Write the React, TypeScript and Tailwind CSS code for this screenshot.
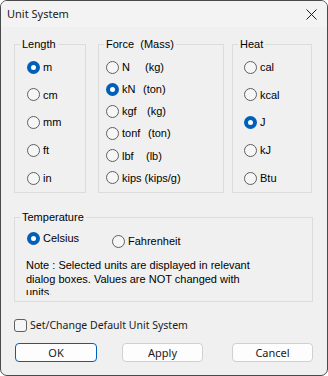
import React from 'react';

const LENGTH = [
  { label: 'm', on: true },
  { label: 'cm', on: false },
  { label: 'mm', on: false },
  { label: 'ft', on: false },
  { label: 'in', on: false },
];

// first part gets a fixed width so the mass column lands where the dialog puts it
const FORCE = [
  { a: 'N', b: '(kg)', w: 'w-[23px]', on: false },
  { a: 'kN', b: '(ton)', w: 'w-[21px]', on: true },
  { a: 'kgf', b: '(kg)', w: 'w-[25px]', on: false },
  { a: 'tonf', b: '(ton)', w: 'w-[26px]', on: false },
  { a: 'lbf', b: '(lb)', w: 'w-[24px]', on: false },
  { a: 'kips', b: '(kips/g)', w: 'mr-[3px]', on: false },
];

const HEAT = [
  { label: 'cal', on: false },
  { label: 'kcal', on: false },
  { label: 'J', on: true },
  { label: 'kJ', on: false },
  { label: 'Btu', on: false },
];

function Radio({ on }: { on: boolean }) {
  if (on) {
    return (
      <span className="w-[13px] h-[13px] rounded-full bg-[#005fb8] flex items-center justify-center shrink-0">
        <span className="w-[5px] h-[5px] rounded-full bg-white" />
      </span>
    );
  }
  return <span className="w-[13px] h-[13px] rounded-full border border-[#5f5f5f] bg-[#f6f6f6] shrink-0" />;
}

function Legend({ children }: { children: React.ReactNode }) {
  return (
    <legend className="ml-[5px] px-[2px] leading-4 text-[11px] text-black">{children}</legend>
  );
}

export default function App() {
  return (
    <div className="w-[328px] h-[376px] bg-[#f0f0f0] border border-[#4a4a4a] rounded-[7px] overflow-hidden flex flex-col font-['Liberation_Sans',Arial,sans-serif] text-black text-[11px]">
      {/* Title bar */}
      <div className="h-[26px] bg-[#f3f3f3] flex items-center justify-between pl-[6px] pr-[10px] shrink-0">
        <span className="text-[11px] font-['Noto_Sans',sans-serif] text-[#1a1a1a]">Unit System</span>
        <svg width="11" height="11" viewBox="0 0 11 11">
          <path d="M0.5 0.5 L10.5 10.5 M10.5 0.5 L0.5 10.5" stroke="#1c1c1c" strokeWidth="1" fill="none" />
        </svg>
      </div>

      <div className="px-[13px] flex flex-col">
        {/* Unit groups */}
        <div className="flex mt-[9px]">
          <fieldset className="w-[72px] border border-[#dcdcdc]">
            <Legend>Length</Legend>
            <div className="pl-[12px] pt-[8px] pb-[7px]">
              <div className="h-[125px] flex flex-col justify-between">
                {LENGTH.map((r) => (
                  <div key={r.label} className="h-[14px] flex items-center gap-[3px]">
                    <Radio on={r.on} />
                    <span>{r.label}</span>
                  </div>
                ))}
              </div>
            </div>
          </fieldset>

          <fieldset className="w-[126px] ml-[12px] border border-[#dcdcdc]">
            <Legend>Force&nbsp;&nbsp;(Mass)</Legend>
            <div className="pl-[7px] pt-[8px] pb-[7px]">
              <div className="h-[125px] flex flex-col justify-between">
                {FORCE.map((r) => (
                  <div key={r.a} className="h-[14px] flex items-center gap-[3px]">
                    <Radio on={r.on} />
                    <span className="whitespace-nowrap">
                      <span className={`inline-block ${r.w}`}>{r.a}</span>
                      {r.b}
                    </span>
                  </div>
                ))}
              </div>
            </div>
          </fieldset>

          <fieldset className="w-[80px] ml-[8px] border border-[#dcdcdc]">
            <Legend>Heat</Legend>
            <div className="pl-[11px] pt-[8px] pb-[7px]">
              <div className="h-[125px] flex flex-col justify-between">
                {HEAT.map((r) => (
                  <div key={r.label} className="h-[14px] flex items-center gap-[3px]">
                    <Radio on={r.on} />
                    <span>{r.label}</span>
                  </div>
                ))}
              </div>
            </div>
          </fieldset>
        </div>

        {/* Temperature */}
        <fieldset className="w-[299px] mt-[16px] border border-[#dcdcdc]">
          <Legend>Temperature</Legend>
          <div className="pt-[6px] pb-[6px]">
            <div className="flex items-start pl-[12px]">
              <div className="w-[85px] h-[14px] flex items-center gap-[3px]">
                <Radio on={true} />
                <span>Celsius</span>
              </div>
              <div className="mt-[3px] h-[14px] flex items-center gap-[3px]">
                <Radio on={false} />
                <span>Fahrenheit</span>
              </div>
            </div>
            <p className="ml-[11px] mt-[11px] w-[232px] h-[36px] overflow-hidden leading-[13.5px]">
              Note : Selected units are displayed in relevant dialog boxes. Values are NOT changed with units.
            </p>
          </div>
        </fieldset>

        {/* Default checkbox */}
        <label className="mt-[17px] flex items-center gap-[3px] h-[13px]">
          <span className="w-[13px] h-[13px] rounded-[3px] border border-[#5f5f5f] bg-[#f6f6f6] shrink-0" />
          <span className="text-[10.5px] font-['Noto_Sans',sans-serif] text-[#1a1a1a]">Set/Change Default Unit System</span>
        </label>

        {/* Buttons */}
        <div className="mt-[11px] flex items-center">
          <button className="ml-[1px] w-[82px] h-[19px] rounded-[4px] border border-[#005fb8] bg-[#fdfdfd] text-[11px] font-['Noto_Sans',sans-serif] leading-none text-[#1a1a1a]">
            OK
          </button>
          <button className="ml-[25px] w-[81px] h-[19px] rounded-[4px] border border-[#d0d0d0] bg-[#fdfdfd] text-[11px] font-['Noto_Sans',sans-serif] leading-none text-[#1a1a1a]">
            Apply
          </button>
          <button className="ml-[29px] w-[81px] h-[19px] rounded-[4px] border border-[#d0d0d0] bg-[#fdfdfd] text-[11px] font-['Noto_Sans',sans-serif] leading-none text-[#1a1a1a]">
            Cancel
          </button>
        </div>
      </div>
    </div>
  );
}
